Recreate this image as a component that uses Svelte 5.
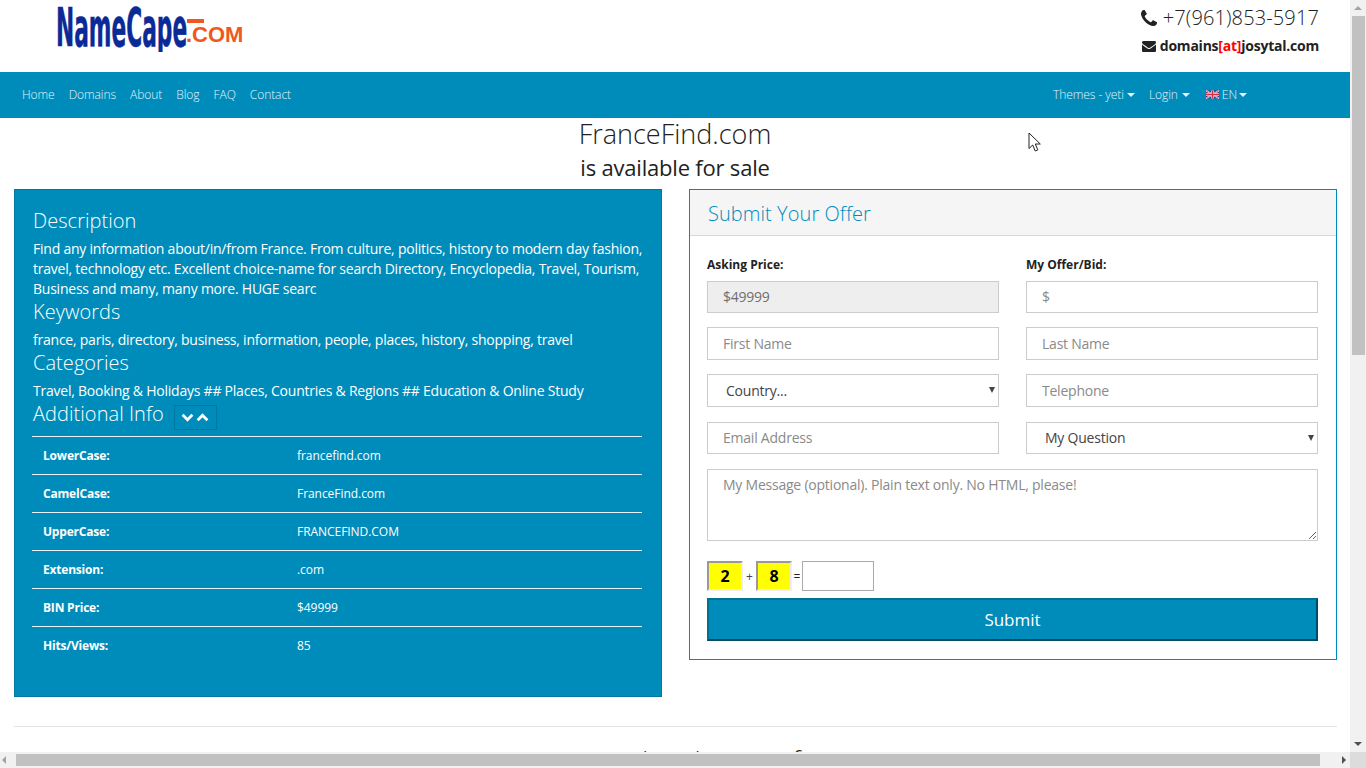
<script>
  const rows = [
    ['LowerCase:', 'francefind.com'],
    ['CamelCase:', 'FranceFind.com'],
    ['UpperCase:', 'FRANCEFIND.COM'],
    ['Extension:', '.com'],
    ['BIN Price:', '$49999'],
    ['Hits/Views:', '85']
  ];
  const leftNav = ['Home', 'Domains', 'About', 'Blog', 'FAQ', 'Contact'];
</script>

<div class="viewport">
  <div class="page">
    <header class="top">
      <div class="logo">
        <div class="logo-clip"><span class="logo-name">NameCape</span></div>
        <span class="logo-bar"></span>
        <span class="logo-com">.COM</span>
      </div>
      <div class="contact">
        <div class="phone">
          <svg class="ph" viewBox="0 0 1408 1408" aria-hidden="true"><path d="M1408 1112q0 27-10 70.500t-21 68.500q-21 50-122 106-94 51-186 51-27 0-53-3.500t-57.500-12.500-47-14.500-55.500-20.500-49-18q-98-35-175-83-127-79-264-216t-216-264q-48-77-83-175-3-9-18-49t-20.500-55.500-14.500-47-12.500-57.500-3.500-53q0-92 51-186 56-101 106-122 25-11 68.500-21t70.500-10q14 0 21 3 18 6 53 76 11 19 30 54t35 63.500 31 53.500q3 4 17.500 25t21.500 35.500 7 28.500q0 20-28.500 50t-62 55-62 53-28.500 46q0 9 5 22.500t8.500 20.500 14 24 11.500 19q76 137 174 235t235 174q2 1 19 11.500t24 14 20.500 8.500 22.500 5q18 0 46-28.500t53-62 55-62 50-28.500q14 0 28.500 7t35.500 21.500 25 17.500q25 15 53.500 31t63.500 35 54 30q70 35 76 53 3 7 3 21z"/></svg>
          <span>+7(961)853-5917</span>
        </div>
        <div class="mail">
          <svg class="env" viewBox="0 0 1792 1408" aria-hidden="true"><path d="M1792 454v794q0 66-47 113t-113 47H160q-66 0-113-47T0 1248V454q44 49 101 87 362 246 497 345 57 42 92.500 65.500t94.500 48 110 24.500h2q51 0 110-24.500t94.500-48T1194 886q170-123 498-345 57-39 100-87zm0-294q0 79-49 151t-122 123q-376 261-468 325-10 7-42.500 30.500t-54 38-52 32.500-57.500 27-50 9h-2q-23 0-50-9t-57.500-27-52-32.500-54-38T639 759q-91-64-262-182.500T172 434q-62-42-117-115.500T0 182q0-78 41.500-130T160 0h1472q65 0 112.500 47t47.500 113z"/></svg>
          <span>domains<em>[at]</em>josytal.com</span>
        </div>
      </div>
    </header>

    <nav class="nav">
      <div class="nav-left">
        {#each leftNav as item}
          <span class="nav-item">{item}</span>
        {/each}
      </div>
      <div class="nav-right">
        <span class="nav-item caret">Themes - yeti</span>
        <span class="nav-item caret login">Login</span>
        <span class="nav-item caret lang">
          <svg class="flag" viewBox="0 0 60 36" aria-hidden="true">
            <rect width="60" height="36" fill="#2a3f8f" />
            <path d="M0 0 60 36M60 0 0 36" stroke="#fff" stroke-width="7" />
            <path d="M0 0 60 36M60 0 0 36" stroke="#d8283c" stroke-width="3" />
            <path d="M30 0V36M0 18H60" stroke="#fff" stroke-width="12" />
            <path d="M30 0V36M0 18H60" stroke="#d8283c" stroke-width="7" />
          </svg>EN
        </span>
      </div>
    </nav>

    <div class="title">
      <h1>FranceFind.com</h1>
      <h2>is available for sale</h2>
    </div>

    <main class="grid">
      <section class="info">
        <h3>Description</h3>
        <p>Find any information about/in/from France. From culture, politics, history to modern day fashion, travel, technology etc. Excellent choice-name for search Directory, Encyclopedia, Travel, Tourism, Business and many, many more. HUGE searc</p>
        <h3>Keywords</h3>
        <p>france, paris, directory, business, information, people, places, history, shopping, travel</p>
        <h3>Categories</h3>
        <p>Travel, Booking &amp; Holidays ## Places, Countries &amp; Regions ## Education &amp; Online Study</p>
        <h3 class="addl">
          Additional Info
          <span class="toggle">
            <svg viewBox="0 0 12 8" aria-hidden="true"><path d="M1.500 1.500 6 6l4.500-4.500" /></svg>
            <svg viewBox="0 0 12 8" aria-hidden="true"><path d="M1.500 6.500 6 2l4.500 4.500" /></svg>
          </span>
        </h3>
        <div class="table">
          {#each rows as r}
            <div class="row">
              <b>{r[0]}</b>
              <span>{r[1]}</span>
            </div>
          {/each}
        </div>
      </section>

      <section class="panel">
        <div class="panel-head">Submit Your Offer</div>
        <form class="form" onsubmit={(e) => e.preventDefault()}>
          <div class="field">
            <label for="ask">Asking Price:</label>
            <input id="ask" class="ctl ro short" value="$49999" readonly />
          </div>
          <div class="field">
            <label for="bid">My Offer/Bid:</label>
            <input id="bid" class="ctl short" placeholder="$" />
          </div>
          <input class="ctl" placeholder="First Name" />
          <input class="ctl" placeholder="Last Name" />
          <div class="sel">
            <select class="ctl"><option>Country...</option></select>
          </div>
          <input class="ctl" placeholder="Telephone" />
          <input class="ctl short low" placeholder="Email Address" />
          <div class="sel low">
            <select class="ctl short"><option>My Question</option></select>
          </div>
          <textarea class="ctl msg" placeholder="My Message (optional). Plain text only. No HTML, please!"></textarea>
          <div class="captcha">
            <span class="num">2</span>
            <span class="op plus">+</span>
            <span class="num">8</span>
            <span class="op">=</span>
            <input class="answer" />
          </div>
          <button class="submit" type="submit">Submit</button>
        </form>
      </section>
    </main>

    <hr class="rule" />
    <h2 class="more">Some more related names for you</h2>
  </div>

  <div class="sb-v">
    <span class="arrow up"></span>
    <span class="thumb-v"></span>
    <span class="arrow down"></span>
  </div>
  <div class="sb-h">
    <span class="arrow left"></span>
    <span class="thumb-h"></span>
    <span class="arrow right"></span>
  </div>
  <div class="corner"></div>

  <svg class="cursor" viewBox="0 0 14 21" aria-hidden="true">
    <path d="M1 1v15.500l3.700-3.500 2.500 6 2.600-1.100-2.500-5.900h5z" fill="#fff" stroke="#222" stroke-width="1" />
  </svg>
</div>

<style>
  :global(body) {
    margin: 0;
    background: #fff;
  }
  .viewport {
    position: relative;
    width: 1366px;
    height: 768px;
    overflow: hidden;
    font-family: "Open Sans", sans-serif;
    color: #222;
  }
  .page {
    width: 1350px;
  }

  .top {
    height: 72px;
    display: flex;
    justify-content: space-between;
    box-sizing: border-box;
    padding-right: 31px;
  }
  .logo {
    position: relative;
    width: 300px;
    height: 72px;
  }
  .logo-clip {
    position: absolute;
    left: 56px;
    top: 0;
    width: 131px;
    height: 52px;
    overflow: hidden;
  }
  .logo-name {
    display: block;
    margin-top: -3px;
    font: bold 53px/62px "DejaVu Sans", sans-serif;
    color: #0b2a96;
    -webkit-text-stroke: 0.6px #0b2a96;
    transform: scaleX(0.41);
    transform-origin: 0 0;
    white-space: nowrap;
  }
  .logo-bar {
    position: absolute;
    left: 187px;
    top: 19px;
    width: 17px;
    height: 4px;
    background: #f0591e;
  }
  .logo-com {
    position: absolute;
    left: 186px;
    top: 22px;
    font: bold 22px/26px "Liberation Sans", sans-serif;
    color: #f0591e;
  }
  .contact {
    text-align: right;
  }
  .phone {
    margin-top: 5px;
    height: 26px;
    display: flex;
    justify-content: flex-end;
    align-items: center;
    gap: 6px;
    font-size: 20px;
    font-weight: 300;
    line-height: 26px;
    letter-spacing: 0.13px;
  }
  .ph {
    width: 16px;
    height: 16px;
    fill: #222;
  }
  .mail {
    margin-top: 5px;
    display: flex;
    justify-content: flex-end;
    align-items: center;
    gap: 4px;
    font-size: 14px;
    font-weight: 700;
    line-height: 20px;
    letter-spacing: -0.23px;
  }
  .mail em {
    font-style: normal;
    color: #f00;
  }
  .env {
    width: 14px;
    height: 11px;
    fill: #222;
  }

  .nav {
    height: 46px;
    background: #008cba;
    display: flex;
    justify-content: space-between;
    align-items: center;
    box-sizing: border-box;
    padding: 0 96px 2px 15px;
    font-size: 12px;
    font-weight: 300;
    letter-spacing: -0.06px;
    color: #e4f4fa;
  }
  .nav-left, .nav-right {
    display: flex;
    align-items: center;
  }
  .nav-item {
    padding: 0 7px;
    white-space: nowrap;
  }
  .caret::after {
    content: "";
    display: inline-block;
    margin-left: 3px;
    vertical-align: 2px;
    border-top: 4px solid #e4f4fa;
    border-left: 4px solid transparent;
    border-right: 4px solid transparent;
    width: 0;
    height: 0;
  }
  .login::after {
    margin-left: 4px;
  }
  .lang {
    padding-left: 9px;
  }
  .lang::after {
    margin-left: 2px;
  }
  .flag {
    width: 13px;
    height: 9px;
    margin-right: 3px;
  }

  .title {
    text-align: center;
  }
  .title h1 {
    margin: 0;
    font-size: 27px;
    line-height: 31px;
    font-weight: 300;
  }
  .title h2 {
    margin: 0;
    font-size: 22px;
    line-height: 36px;
    letter-spacing: -0.2px;
    font-weight: 400;
  }

  .grid {
    display: grid;
    grid-template-columns: 648px 648px;
    gap: 27px;
    padding: 0 0 0 14px;
    align-items: start;
    margin-top: 4px;
  }

  .info {
    box-sizing: border-box;
    height: 508px;
    background: #008cba;
    border: 1px solid #0079a1;
    color: #fff;
    padding: 17px 19px 0 17px;
  }
  .info h3 {
    margin: 0;
    padding-left: 1px;
    font-size: 20px;
    line-height: 28px;
    letter-spacing: 0.05px;
    font-weight: 300;
    height: 32px;
  }
  .info p {
    margin: 0 -4px -1px 1px;
    font-size: 14px;
    line-height: 20px;
    letter-spacing: -0.23px;
  }
  .info .addl {
    display: flex;
    align-items: center;
    gap: 10px;
    height: 28px;
  }
  .toggle {
    box-sizing: border-box;
    width: 43px;
    height: 25px;
    margin-top: 6px;
    display: flex;
    justify-content: center;
    align-items: center;
    gap: 2px;
    border: 1px solid #0079a1;
  }
  .toggle svg {
    width: 13px;
    height: 9px;
    fill: none;
    stroke: #fff;
    stroke-width: 2.600;
  }
  .table {
    margin-top: 8px;
  }
  .row {
    display: grid;
    grid-template-columns: 254px 1fr;
    height: 38px;
    box-sizing: border-box;
    align-items: center;
    padding-left: 11px;
    border-top: 1px solid #e6f3f8;
    font-size: 12px;
    letter-spacing: -0.05px;
  }
  .row b {
    font-weight: 700;
    letter-spacing: -0.2px;
  }

  .panel {
    box-sizing: border-box;
    height: 471px;
    border: 1px solid #008cba;
  }
  .panel-head {
    box-sizing: border-box;
    height: 46px;
    background: #f5f5f5;
    border-bottom: 1px solid #d8d8d8;
    color: #008cba;
    font-size: 20px;
    font-weight: 300;
    letter-spacing: 0.06px;
    line-height: 48px;
    padding-left: 18px;
  }
  .form {
    display: grid;
    grid-template-columns: 292px 292px;
    column-gap: 27px;
    row-gap: 14px;
    padding: 19px 18px 0 17px;
  }
  .field {
    display: flex;
    flex-direction: column;
  }
  label {
    font-size: 12px;
    font-weight: 700;
    line-height: 20px;
    margin-bottom: 6px;
  }
  .ctl {
    box-sizing: border-box;
    width: 100%;
    height: 33px;
    margin: 0;
    border: 1px solid #ccc;
    border-radius: 0;
    background: #fff;
    padding: 0 15px 1px;
    font-family: "Open Sans", sans-serif;
    font-size: 14px;
    letter-spacing: -0.23px;
    color: #6f6f6f;
    outline: none;
  }
  .ctl.short {
    height: 32px;
  }
  .low {
    margin-top: 1px;
  }
  .ctl::placeholder {
    color: #8a8a8a;
    opacity: 1;
  }
  .ro {
    background: #eee;
  }
  .sel {
    position: relative;
  }
  .sel select {
    appearance: none;
    padding-left: 18px;
    color: #444;
  }
  .sel::after {
    content: "";
    position: absolute;
    right: 4px;
    top: 13px;
    border-top: 6px solid #444;
    border-left: 3px solid transparent;
    border-right: 3px solid transparent;
  }
  .msg {
    grid-column: 1 / 3;
    height: 72px;
    margin-top: 1px;
    padding-top: 5px;
    display: block;
    line-height: 20px;
  }
  .captcha {
    grid-column: 1 / 3;
    display: flex;
    align-items: center;
    height: 30px;
    margin-top: 6px;
  }
  .num {
    box-sizing: border-box;
    width: 36px;
    height: 30px;
    background: #ff0;
    border: 2px solid;
    border-color: #999 #eee #eee #999;
    color: #000;
    font-size: 16px;
    font-weight: 700;
    line-height: 26px;
    text-align: center;
  }
  .op {
    font-size: 12px;
    color: #222;
    width: 10px;
    text-align: center;
  }
  .plus {
    width: 13px;
    color: #446;
  }
  .answer {
    box-sizing: border-box;
    width: 72px;
    height: 30px;
    margin: 0;
    border: 1px solid #aaa;
    background: #fff;
    outline: none;
  }
  .submit {
    grid-column: 1 / 3;
    box-sizing: border-box;
    height: 43px;
    margin-top: -7px;
    width: 611px;
    background: #008cba;
    border: 2px solid #007095;
    border-bottom-color: #004b63;
    border-right-color: #004b63;
    color: #fff;
    font-family: "Open Sans", sans-serif;
    font-size: 17px;
  }

  .rule {
    margin: 29px 13px 0 14px;
    border: 0;
    border-top: 1px solid #e4e4e4;
  }
  .more {
    margin: 13px 0 0;
    text-align: center;
    font-size: 26px;
    line-height: 40px;
    font-weight: 300;
  }

  .sb-v {
    position: absolute;
    right: 0;
    top: 0;
    width: 16px;
    height: 752px;
    background: #f1f1f1;
  }
  .thumb-v {
    position: absolute;
    left: 2px;
    top: 16px;
    width: 13px;
    height: 339px;
    background: #c1c1c1;
  }
  .sb-h {
    position: absolute;
    left: 0;
    bottom: 0;
    width: 1350px;
    height: 16px;
    background: #f1f1f1;
  }
  .thumb-h {
    position: absolute;
    left: 16px;
    top: 2px;
    width: 1304px;
    height: 12px;
    background: #c1c1c1;
  }
  .corner {
    position: absolute;
    right: 0;
    bottom: 0;
    width: 16px;
    height: 16px;
    background: #dcdcdc;
  }
  .arrow {
    position: absolute;
    width: 0;
    height: 0;
  }
  .up {
    left: 4px;
    top: 6px;
    border-left: 4px solid transparent;
    border-right: 4px solid transparent;
    border-bottom: 4px solid #a3a3a3;
  }
  .down {
    left: 4px;
    bottom: 6px;
    border-left: 4px solid transparent;
    border-right: 4px solid transparent;
    border-top: 4px solid #505050;
  }
  .left {
    left: 2px;
    top: 4px;
    border-top: 4px solid transparent;
    border-bottom: 4px solid transparent;
    border-right: 4px solid #a3a3a3;
  }
  .right {
    right: 4px;
    top: 4px;
    border-top: 4px solid transparent;
    border-bottom: 4px solid transparent;
    border-left: 4px solid #505050;
  }
  .cursor {
    position: absolute;
    left: 1028px;
    top: 132px;
    width: 14px;
    height: 21px;
  }
</style>
